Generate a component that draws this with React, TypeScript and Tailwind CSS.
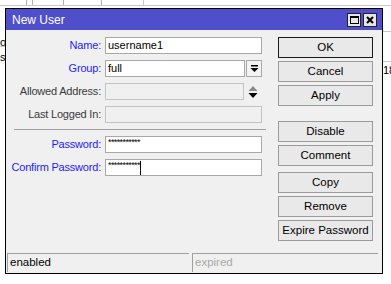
import React from 'react';

const font = "font-['Liberation_Sans',Arial,sans-serif]";

function Field({ children, disabled, className = '' }: { children?: React.ReactNode; disabled?: boolean; className?: string }) {
  return (
    <div
      className={`h-[17px] flex items-center px-[2px] border text-[11px] leading-none ${
        disabled ? 'bg-[#f0f0f0] border-[#c4c4c4]' : 'bg-white border-[#a8a8a8]'
      } ${className}`}
    >
      {children}
    </div>
  );
}

function Row({ label, blue, children }: { label: string; blue?: boolean; children: React.ReactNode }) {
  return (
    <div className="flex items-center h-[17px]">
      <div className={`w-[99px] pr-[4px] text-right whitespace-nowrap text-[11px] tracking-[-0.2px] ${blue ? 'text-[#2222ff]' : 'text-[#3a3a3a]'}`}>{label}</div>
      <div className="flex items-center w-[157px]">{children}</div>
    </div>
  );
}

function Btn({ children, main, className = '' }: { children: React.ReactNode; main?: boolean; className?: string }) {
  return (
    <div
      className={`h-[21px] w-[95px] flex items-center justify-center text-[11.5px] text-black bg-[#e9e9e9] border ${
        main ? 'border-[#1a1a1a]' : 'border-[#9a9a9a]'
      } ${className}`}
    >
      {children}
    </div>
  );
}

export default function App() {
  return (
    <div className={`relative w-[391px] h-[284px] bg-white overflow-hidden ${font}`}>
      {/* what is behind the dialog: bits of a list */}
      <div className="absolute left-0 top-0 w-[391px] h-[6px] border-b border-[#c8c8c8]" />
      <div className="absolute left-[26px] top-0 w-[7px] h-[5px] border-x border-[#b0b0b0]" />
      <div className="absolute left-[63px] top-0 w-[39px] h-[5px] border-x border-[#b0b0b0]" />
      <div className="absolute left-[143px] top-0 w-[75px] h-[5px] border-l border-[#c8c8c8]" />
      <div className="absolute left-0 top-[37px] w-[5px] h-[10px] border-b border-[#c8c8c8] text-[11px] leading-[10px] overflow-hidden">o</div>
      <div className="absolute left-0 top-[51px] w-[5px] h-[12px] text-[11px] leading-[12px] overflow-hidden">s</div>
      <div className="absolute left-[383px] top-[31px] w-[8px] h-[31px] border-y border-[#c8c8c8]" />
      <div className="absolute left-[383px] top-[64px] w-[8px] overflow-hidden text-[11px] leading-[12px]">18</div>

      {/* dialog */}
      <div className="absolute left-[5px] top-[8px] w-[378px] h-[266px] border border-black bg-[#f0f0f0] flex flex-col">
        <div className="h-[21px] bg-[#4f4fcb] flex items-center justify-between pl-[6px] pr-[5px]">
          <span className="text-white text-[12px]">New User</span>
          <div className="flex gap-[2px]">
            <div className="w-[14px] h-[14px] border border-[#222] bg-[#e6e6e6] flex items-center justify-center">
              <div className="w-[9px] h-[8px] border border-black border-t-2" />
            </div>
            <div className="w-[14px] h-[14px] border border-[#222] bg-[#e6e6e6] flex items-center justify-center">
              <svg width="8" height="8" viewBox="0 0 8 8">
                <path d="M1 1L7 7M7 1L1 7" stroke="#000" strokeWidth="2" />
              </svg>
            </div>
          </div>
        </div>

        <div className="flex flex-1">
          <div className="flex flex-col pt-[7px] w-[266px]">
            <div className="flex flex-col gap-[6px]">
              <Row label="Name:" blue>
                <Field className="w-full">username1</Field>
              </Row>
              <Row label="Group:" blue>
                <Field className="w-[140px]">full</Field>
                <div className="ml-[1px] w-[16px] h-[17px] border border-[#a8a8a8] bg-[#f4f4f4] flex items-center justify-center">
                  <svg width="9" height="9" viewBox="0 0 9 9">
                    <rect x="1" y="1" width="7" height="1.5" fill="#000" />
                    <path d="M0.5 4H8.5L4.5 8Z" fill="#000" />
                  </svg>
                </div>
              </Row>
              <Row label="Allowed Address:">
                <Field disabled className="w-[139px]" />
                <div className="w-[18px] flex justify-center">
                  <svg width="10" height="14" viewBox="0 0 10 14">
                    <path d="M5 1L9.5 6H0.5Z" fill="#8a8a8a" />
                    <path d="M0.5 8H9.5L5 13Z" fill="#000" />
                  </svg>
                </div>
              </Row>
              <Row label="Last Logged In:">
                <Field disabled className="w-full" />
              </Row>
            </div>
            <div className="ml-[8px] mr-[6px] mt-[6px] mb-[6px] h-px bg-[#a0a0a0]" />
            <div className="flex flex-col gap-[6px]">
              <Row label="Password:" blue>
                <Field className="w-full">
                  <span className="text-[9px] leading-none -mt-[5px] tracking-[-0.6px]">***********</span>
                </Field>
              </Row>
              <Row label="Confirm Password:" blue>
                <Field className="w-full">
                  <span className="text-[9px] leading-none -mt-[5px] tracking-[-0.6px]">***********</span>
                  <span className="w-px h-[14px] bg-black" />
                </Field>
              </Row>
            </div>
          </div>

          <div className="flex flex-col pt-[7px] ml-[6px]">
            <Btn main>OK</Btn>
            <Btn className="mt-[3px]">Cancel</Btn>
            <Btn className="mt-[3px]">Apply</Btn>
            <Btn className="mt-[15px]">Disable</Btn>
            <Btn className="mt-[3px]">Comment</Btn>
            <Btn className="mt-[6px]">Copy</Btn>
            <Btn className="mt-[3px]">Remove</Btn>
            <Btn className="mt-[3px]">Expire Password</Btn>
          </div>
        </div>

        <div className="flex gap-[3px] pl-[1px] pr-[4px] pb-px">
          <div className="h-[19px] w-[182px] border-t border-l border-[#a0a0a0] flex items-center pl-[2px] text-[11.5px] text-black">enabled</div>
          <div className="h-[19px] flex-1 border-t border-l border-[#a0a0a0] flex items-center pl-[2px] text-[11.5px] text-[#a8a8a8]">expired</div>
        </div>
      </div>
    </div>
  );
}
